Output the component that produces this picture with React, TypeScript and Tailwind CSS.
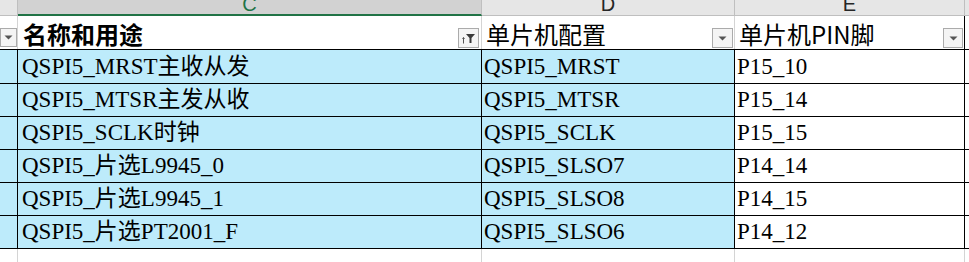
import React from "react";

const BLUE = "bg-[#bdebfb]";

const rows = [
  { c: "QSPI5_MRST主收从发", d: "QSPI5_MRST", e: "P15_10", h: "h-[34px]" },
  { c: "QSPI5_MTSR主发从收", d: "QSPI5_MTSR", e: "P15_14", h: "h-[33px]" },
  { c: "QSPI5_SCLK时钟", d: "QSPI5_SCLK", e: "P15_15", h: "h-[33px]" },
  { c: "QSPI5_片选L9945_0", d: "QSPI5_SLSO7", e: "P14_14", h: "h-[33px]" },
  { c: "QSPI5_片选L9945_1", d: "QSPI5_SLSO8", e: "P14_15", h: "h-[33px]" },
  { c: "QSPI5_片选PT2001_F", d: "QSPI5_SLSO6", e: "P14_12", h: "h-[33px]" },
];

const DropButton = ({ sorted = false, className = "" }: { sorted?: boolean; className?: string }) => (
  <div
    className={`flex items-center justify-center border border-[#ababab] bg-[#f4f4f4] ${className}`}
  >
    {sorted ? (
      <svg width="19" height="18" viewBox="0 0 19 18">
        <path d="M4.5 8.5v6" stroke="#555" strokeWidth="1" />
        <path d="M3 10l1.5-2 1.5 2z" fill="#555" />
        <path d="M7 5h9l-3.5 4v5h-2V9z" fill="#3a3a3a" />
      </svg>
    ) : (
      <svg width="9" height="5" viewBox="0 0 9 5">
        <path d="M0.5 0.5h8L4.5 4.5z" fill="#555" />
      </svg>
    )}
  </div>
);

const ColLabel = ({ label, selected = false }: { label: string; selected?: boolean }) => (
  <div className="flex h-full justify-center overflow-hidden">
    <span
      className={`mt-[-6px] font-['Liberation_Sans',sans-serif] text-[20px] leading-[20px] ${
        selected ? "text-[#217346]" : "text-[#262626]"
      }`}
    >
      {label}
    </span>
  </div>
);

export default function App() {
  const dataFont = "font-['Liberation_Serif','Noto_Sans_CJK_SC',serif] text-[23px] text-black";
  const headFont = "font-['Noto_Sans_CJK_SC',sans-serif] text-[24px] text-black leading-none";

  return (
    <div className="w-[969px] h-[262px] overflow-hidden bg-white">
      {/* column letters */}
      <div className="flex h-[16px]">
        <div className="w-[18px] shrink-0 border-r border-b border-[#bfbfbf] bg-[#e6e6e6]" />
        <div className="w-[464px] shrink-0 border-r border-[#bfbfbf] border-b-2 border-b-[#217346] bg-[#d2d2d2]">
          <ColLabel label="C" selected />
        </div>
        <div className="w-[253px] shrink-0 border-r border-b border-[#bfbfbf] bg-[#e6e6e6]">
          <ColLabel label="D" />
        </div>
        <div className="w-[230px] shrink-0 border-r border-b border-[#bfbfbf] bg-[#e6e6e6]">
          <ColLabel label="E" />
        </div>
        <div className="flex-1 border-b border-[#bfbfbf] bg-[#e6e6e6]" />
      </div>

      {/* header row */}
      <div className="flex h-[34px] border-b border-black">
        <div className="w-[18px] shrink-0 border-r border-[#d4d4d4] flex items-end pb-[2px]">
          <DropButton className="w-[17px] h-[19px]" />
        </div>
        <div className="w-[464px] shrink-0 border-r border-[#d4d4d4] flex items-center justify-between pl-[5px] pr-[2px] pt-[3px]">
          <span className={`${headFont} font-bold`}>名称和用途</span>
          <DropButton sorted className="w-[21px] h-[20px] self-end mb-[1px]" />
        </div>
        <div className="w-[253px] shrink-0 border-r border-[#d4d4d4] flex items-center justify-between pl-[4px] pr-[1px] pt-[3px]">
          <span className={headFont}>单片机配置</span>
          <DropButton className="w-[21px] h-[20px] self-end mb-[1px]" />
        </div>
        <div className="w-[230px] shrink-0 border-r border-black flex items-center justify-between pl-[4px] pr-[1px] pt-[3px]">
          <span className={headFont}>单片机PIN脚</span>
          <DropButton className="w-[20px] h-[20px] self-end mb-[1px]" />
        </div>
        <div className="flex-1" />
      </div>

      {/* data rows */}
      {rows.map((r) => (
        <div key={r.d} className={`flex ${r.h} border-b border-black`}>
          <div className={`w-[18px] shrink-0 border-r border-black ${BLUE}`} />
          <div className={`w-[464px] shrink-0 border-r border-black ${BLUE} flex items-center pl-[4px] pt-[1px]`}>
            <span className={dataFont}>{r.c}</span>
          </div>
          <div className={`w-[253px] shrink-0 border-r border-black ${BLUE} flex items-center pl-[2px] pt-[1px]`}>
            <span className={dataFont}>{r.d}</span>
          </div>
          <div className="w-[230px] shrink-0 border-r border-black flex items-center pl-[2px] pt-[1px]">
            <span className={dataFont}>{r.e}</span>
          </div>
          <div className="flex-1" />
        </div>
      ))}

      {/* empty grid below */}
      <div className="flex h-[20px]">
        <div className="w-[18px] shrink-0 border-r border-[#d4d4d4]" />
        <div className="w-[464px] shrink-0 border-r border-[#d4d4d4]" />
        <div className="w-[253px] shrink-0 border-r border-[#d4d4d4]" />
        <div className="w-[230px] shrink-0 border-r border-[#d4d4d4]" />
        <div className="flex-1" />
      </div>
    </div>
  );
}
